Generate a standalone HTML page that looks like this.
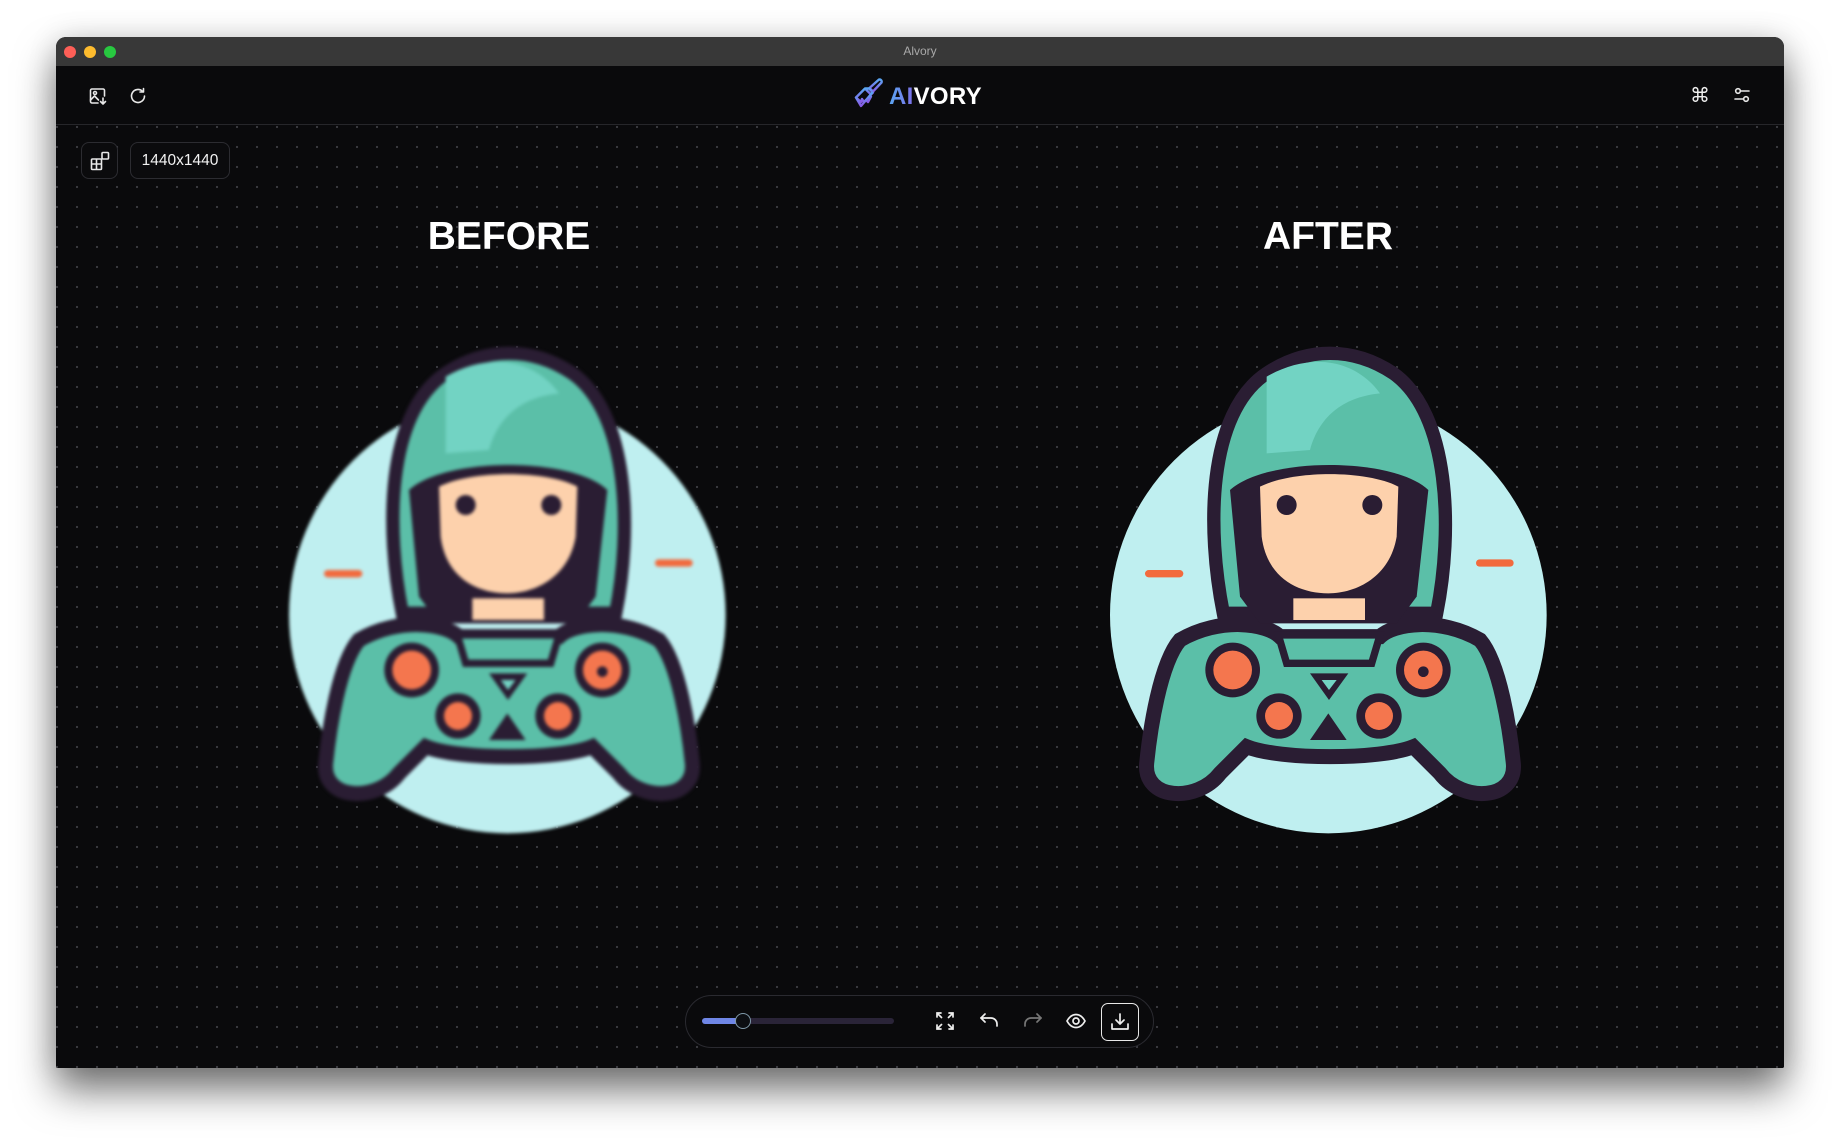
<!DOCTYPE html>
<html><head><meta charset="utf-8"><style>
*{margin:0;padding:0;box-sizing:border-box}
body{width:1840px;height:1143px;background:#fff;position:relative;overflow:hidden;font-family:"Liberation Sans",sans-serif}
.win{position:absolute;left:56px;top:37px;width:1728px;height:1031px;background:#0a0a0c;border-radius:10px 10px 2px 2px;box-shadow:0 22px 40px rgba(0,0,0,.55),0 0 30px rgba(0,0,0,.12);overflow:hidden}
.tb{position:absolute;left:0;top:0;width:100%;height:29px;background:#383838;color:#a9a9a9;font-size:12px;text-align:center;line-height:29px}
.dot{position:absolute;top:9px;width:12px;height:12px;border-radius:50%}
.hdr{position:absolute;left:0;top:29px;width:100%;height:59px;background:#0a0a0c;border-bottom:1px solid #26262a}
.canvas{position:absolute;left:0;top:89px;width:100%;height:942px;background-color:#0a0a0c;background-image:radial-gradient(circle,#3a3a40 1px,transparent 1.3px);background-size:20px 20px;background-position:-49px -9px}
.abs{position:absolute}
.box{position:absolute;border:1px solid #2c2c31;border-radius:8px;background:#0b0b0d}
.lbl{position:absolute;color:#fff;font-weight:bold;font-size:39px;width:300px;text-align:center}
</style></head><body>
<div class="win">
 <div class="tb">Alvory
  <div class="dot" style="left:8px;background:#fe5f57"></div>
  <div class="dot" style="left:28px;background:#febc2e"></div>
  <div class="dot" style="left:48px;background:#28c840"></div>
 </div>
 <div class="hdr">
  <svg class="abs" style="left:32px;top:20px" width="20" height="20" viewBox="0 0 20 20" fill="none" stroke="#e8e8e8" stroke-width="1.6" stroke-linecap="round" stroke-linejoin="round"><path d="M10 17H4a1.5 1.5 0 0 1-1.5-1.5v-11A1.5 1.5 0 0 1 4 3h11a1.5 1.5 0 0 1 1.5 1.5V10"/><circle cx="7" cy="7" r="1.5"/><path d="M2.5 14l4-4 4 4"/><path d="M15 12v6M12.5 15.5L15 18l2.5-2.5"/></svg>
  <svg class="abs" style="left:72px;top:20px" width="20" height="20" viewBox="0 0 20 20" fill="none" stroke="#e8e8e8" stroke-width="1.6" stroke-linecap="round" stroke-linejoin="round"><path d="M16.5 10a6.5 6.5 0 1 1-2-4.7"/><path d="M15.5 2.5v3.5H12"/></svg>
  <svg class="abs" style="left:797px;top:10px" width="30" height="33" viewBox="0 0 30 33" fill="none" stroke="url(#lg)" stroke-width="2.4" stroke-linejoin="round" stroke-linecap="round"><defs><linearGradient id="lg" x1="0" y1="0" x2="0" y2="1"><stop offset="0" stop-color="#5aa6f2"/><stop offset="1" stop-color="#8a5ae6"/></linearGradient></defs><path d="M26 3.5a2.2 2.2 0 0 1 2.5 3L20 15.5l-3.5-3.5z"/><path d="M16 12.5l4 4-2 2-6-6z"/><path d="M11.5 13L3 21.5l5 4.5 1-3 2 3 2-2 2 2 3-5.5"/><path d="M3 21.5l5 8.5 11-13"/></svg>
  <div class="abs" style="left:833px;top:17px;font-size:24px;font-weight:bold;color:#fff;letter-spacing:0.3px"><span style="background:linear-gradient(90deg,#5aa6f2,#7d6ee8);-webkit-background-clip:text;color:transparent">AI</span>VORY</div>
  <div class="abs" style="left:1634px;top:17px;color:#eee;font-size:20px;font-family:'DejaVu Sans',sans-serif">⌘</div>
  <svg class="abs" style="left:1677px;top:20px" width="18" height="18" viewBox="0 0 18 18" fill="none" stroke="#e8e8e8" stroke-width="1.6" stroke-linecap="round"><circle cx="5" cy="5" r="2.3"/><path d="M7.5 5H16"/><circle cx="13" cy="13" r="2.3"/><path d="M2 13h8.5"/></svg>
 </div>
 <div class="canvas">
  <div class="box" style="left:25px;top:16px;width:37px;height:37px"></div>
  <svg class="abs" style="left:34px;top:25px" width="20" height="20" viewBox="0 0 20 20" fill="none" stroke="#e8e8e8" stroke-width="1.6"><rect x="1.5" y="8" width="10" height="10.5" rx="1"/><path d="M1.5 13h10M6.5 8v10.5"/><rect x="12" y="1.5" width="6.5" height="6.5" rx="1"/></svg>
  <div class="box" style="left:74px;top:16px;width:100px;height:37px;color:#f2f2f2;font-size:15.5px;line-height:35px;text-align:center">1440x1440</div>
  <div class="lbl" style="left:303px;top:89px">BEFORE</div>
  <div class="lbl" style="left:1122px;top:89px">AFTER</div>
 </div>
 <div class="abs" style="left:629px;top:958px;width:469px;height:53px;border:1px solid #2a2a30;border-radius:27px;background:#0a0a0c"></div>
 <div class="abs" style="left:646px;top:981px;width:192px;height:6px;border-radius:3px;background:#2a2438"></div>
 <div class="abs" style="left:646px;top:981px;width:42px;height:6px;border-radius:3px;background:#6f86e6"></div>
 <div class="abs" style="left:679px;top:976px;width:16px;height:16px;border-radius:50%;border:1.3px solid #7f98a8;background:#0c0e12"></div>
 <svg class="abs" style="left:879px;top:974px" width="20" height="20" viewBox="0 0 20 20" fill="none" stroke="#eee" stroke-width="1.7" stroke-linecap="round"><path d="M2 6V2h4M2 2l4.5 4.5M14 2h4v4M18 2l-4.5 4.5M2 14v4h4M2 18l4.5-4.5M18 14v4h-4M18 18l-4.5-4.5"/></svg>
 <svg class="abs" style="left:923px;top:975px" width="20" height="18" viewBox="0 0 20 18" fill="none" stroke="#eee" stroke-width="1.7" stroke-linecap="round" stroke-linejoin="round"><path d="M2 6h10a6 6 0 0 1 6 6v2"/><path d="M6 2L2 6l4 4"/></svg>
 <svg class="abs" style="left:967px;top:975px" width="20" height="18" viewBox="0 0 20 18" fill="none" stroke="#777" stroke-width="1.7" stroke-linecap="round" stroke-linejoin="round"><path d="M18 6H8a6 6 0 0 0-6 6v2"/><path d="M14 2l4 4-4 4"/></svg>
 <svg class="abs" style="left:1010px;top:976px" width="20" height="16" viewBox="0 0 20 16" fill="none" stroke="#eee" stroke-width="1.7"><path d="M1 8c2.5-4.5 5.5-6.5 9-6.5s6.5 2 9 6.5c-2.5 4.5-5.5 6.5-9 6.5S3.5 12.5 1 8z"/><circle cx="10" cy="8" r="3"/></svg>
 <div class="abs" style="left:1045px;top:966px;width:38px;height:38px;border:1.3px solid #e8e8e8;border-radius:7px"></div>
 <svg class="abs" style="left:1054px;top:975px" width="20" height="20" viewBox="0 0 20 20" fill="none" stroke="#eee" stroke-width="1.7" stroke-linecap="round" stroke-linejoin="round"><path d="M10 2v10M6 8l4 4 4-4"/><path d="M2 12v5h16v-5"/></svg>
</div>

<svg class="abs" style="left:259px;top:330px;filter:blur(1.6px)" width="500" height="520" viewBox="0 0 1500 1560">
 <circle cx="745" cy="855" r="655" fill="#bfeff0"/>
 <rect x="195" y="720" width="115" height="22" rx="11" fill="#f26a3d"/><rect x="1188" y="688" width="113" height="22" rx="11" fill="#f26a3d"/>
 <path d="M300 930C420 860 560 880 600 920L900 920C940 880 1080 860 1200 930C1260 1000 1290 1200 1300 1300C1310 1410 1150 1420 1080 1330L1000 1250C900 1290 600 1290 500 1250L420 1330C350 1420 190 1410 200 1300C210 1200 240 1000 300 930Z" fill="#5bbfa8" stroke="#2a1d33" stroke-width="45"/>
 <path d="M430 850C380 600 380 250 560 130C680 50 820 50 940 130C1110 250 1120 600 1070 850Z" fill="#5bbfa8" stroke="#2a1d33" stroke-width="40"/>
 <path d="M560 140C680 70 820 80 900 190C800 200 720 250 690 360L560 370Z" fill="#72d3c3"/>
 <path d="M450 480C560 380 940 380 1045 480L1010 800L950 880L540 880L480 800Z" fill="#2a1d33"/>
 <path d="M540 470C640 420 860 420 955 470L950 620C930 740 830 790 745 790C650 790 560 740 545 620Z" fill="#fdd1ac"/>
 <rect x="640" y="805" width="215" height="65" fill="#fdd1ac"/>
 <circle cx="620" cy="525" r="30" fill="#2a1d33"/><circle cx="877" cy="525" r="30" fill="#2a1d33"/>
 <path d="M595 915L900 915L875 1000L620 1000Z" fill="#5bbfa8" stroke="#2a1d33" stroke-width="22"/>
 <circle cx="458" cy="1020" r="82" fill="#2a1d33"/><circle cx="458" cy="1020" r="58" fill="#f4764e"/>
 <circle cx="1030" cy="1020" r="82" fill="#2a1d33"/><circle cx="1030" cy="1020" r="58" fill="#f4764e"/><circle cx="1030" cy="1025" r="16" fill="#2a1d33"/>
 <circle cx="597" cy="1158" r="68" fill="#2a1d33"/><circle cx="597" cy="1158" r="42" fill="#f4764e"/>
 <circle cx="897" cy="1158" r="68" fill="#2a1d33"/><circle cx="897" cy="1158" r="42" fill="#f4764e"/>
 <path d="M690 1030L805 1030L747 1110Z" fill="#2a1d33"/><path d="M725 1050L770 1050L747 1080Z" fill="#72d3c3"/>
 <path d="M745 1150L800 1230L690 1230Z" fill="#2a1d33"/>
</svg>

<svg class="abs" style="left:1080px;top:330px" width="500" height="520" viewBox="0 0 1500 1560">
 <circle cx="745" cy="855" r="655" fill="#bfeff0"/>
 <rect x="195" y="720" width="115" height="22" rx="11" fill="#f26a3d"/><rect x="1188" y="688" width="113" height="22" rx="11" fill="#f26a3d"/>
 <path d="M300 930C420 860 560 880 600 920L900 920C940 880 1080 860 1200 930C1260 1000 1290 1200 1300 1300C1310 1410 1150 1420 1080 1330L1000 1250C900 1290 600 1290 500 1250L420 1330C350 1420 190 1410 200 1300C210 1200 240 1000 300 930Z" fill="#5bbfa8" stroke="#2a1d33" stroke-width="45"/>
 <path d="M430 850C380 600 380 250 560 130C680 50 820 50 940 130C1110 250 1120 600 1070 850Z" fill="#5bbfa8" stroke="#2a1d33" stroke-width="40"/>
 <path d="M560 140C680 70 820 80 900 190C800 200 720 250 690 360L560 370Z" fill="#72d3c3"/>
 <path d="M450 480C560 380 940 380 1045 480L1010 800L950 880L540 880L480 800Z" fill="#2a1d33"/>
 <path d="M540 470C640 420 860 420 955 470L950 620C930 740 830 790 745 790C650 790 560 740 545 620Z" fill="#fdd1ac"/>
 <rect x="640" y="805" width="215" height="65" fill="#fdd1ac"/>
 <circle cx="620" cy="525" r="30" fill="#2a1d33"/><circle cx="877" cy="525" r="30" fill="#2a1d33"/>
 <path d="M595 915L900 915L875 1000L620 1000Z" fill="#5bbfa8" stroke="#2a1d33" stroke-width="22"/>
 <circle cx="458" cy="1020" r="82" fill="#2a1d33"/><circle cx="458" cy="1020" r="58" fill="#f4764e"/>
 <circle cx="1030" cy="1020" r="82" fill="#2a1d33"/><circle cx="1030" cy="1020" r="58" fill="#f4764e"/><circle cx="1030" cy="1025" r="16" fill="#2a1d33"/>
 <circle cx="597" cy="1158" r="68" fill="#2a1d33"/><circle cx="597" cy="1158" r="42" fill="#f4764e"/>
 <circle cx="897" cy="1158" r="68" fill="#2a1d33"/><circle cx="897" cy="1158" r="42" fill="#f4764e"/>
 <path d="M690 1030L805 1030L747 1110Z" fill="#2a1d33"/><path d="M725 1050L770 1050L747 1080Z" fill="#72d3c3"/>
 <path d="M745 1150L800 1230L690 1230Z" fill="#2a1d33"/>
</svg>
</body></html>
